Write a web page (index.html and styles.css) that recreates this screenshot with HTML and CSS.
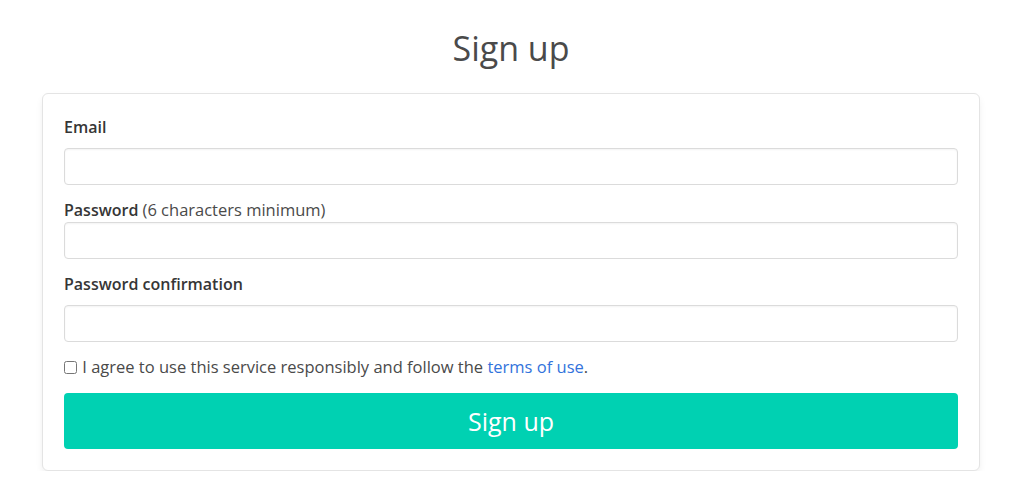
FILE: index.html
```html
<!DOCTYPE html>
<html lang="en">
<head>
  <meta charset="UTF-8">
  <meta name="viewport" content="width=device-width, initial-scale=1.0">
  <title>Sign up</title>
  <link rel="stylesheet" href="styles.css">
</head>
<body>
  <section class="page">
    <h1 class="title">Sign up</h1>

    <form class="box" action="#" onsubmit="return false;">
      <div class="field">
        <label class="label" for="email">Email</label>
        <input class="input" type="email" id="email">
      </div>

      <div class="field">
        <div class="label label-tight">Password <span class="hint">(6 characters minimum)</span></div>
        <input class="input" type="password" id="password">
      </div>

      <div class="field">
        <label class="label" for="password_confirmation">Password confirmation</label>
        <input class="input" type="password" id="password_confirmation">
      </div>

      <div class="field">
        <label class="checkbox"><input type="checkbox"> I agree to use this service responsibly and follow the <a href="#">terms of use</a>.</label>
      </div>

      <button class="button" type="submit">Sign up</button>
    </form>
  </section>
</body>
</html>
```

FILE: styles.css
```css
body {
  margin: 0;
  font-family: "Open Sans", Lato, sans-serif;
  font-size: 16.5px;
  line-height: 24px;
  color: #4a4a4a;
  background: #ffffff;
}
.page {
  padding: 30px 44px 0 42px;
}
.title {
  margin: 0 0 27px;
  font-size: 34px;
  font-weight: 400;
  line-height: 36px;
  text-align: center;
  color: #4a4a4a;
}
.box {
  background: #fff;
  border: 1px solid #e4e4e4;
  border-radius: 6px;
  box-shadow: 0 4px 8px -2px rgba(10, 10, 10, 0.1);
  padding: 21px 21px 21px;
}
.field {
  margin-bottom: 13px;
}
.label {
  display: block;
  font-size: 16px;
  font-weight: 600;
  color: #363636;
  margin-bottom: 9px;
}
.label-tight {
  margin-bottom: 0;
}
.hint {
  font-size: 16.5px;
  font-weight: 400;
  color: #4a4a4a;
}
.input {
  display: block;
  box-sizing: border-box;
  width: 100%;
  height: 37px;
  padding: 0 11px;
  font: inherit;
  border: 1px solid #dbdbdb;
  border-radius: 4px;
  box-shadow: inset 0 1px 2px rgba(10, 10, 10, 0.05);
}
.checkbox {
  display: block;
  color: #4a4a4a;
}
.checkbox input {
  margin: 0 1px 0 0;
  width: 13px;
  height: 13px;
  vertical-align: -1px;
}
.checkbox a {
  color: #3273dc;
  text-decoration: none;
}
.button {
  display: block;
  width: 100%;
  height: 56px;
  margin-top: 14px;
  background: #00d1b2;
  color: #fff;
  border: none;
  border-radius: 4px;
  font-family: inherit;
  font-size: 25px;
  cursor: pointer;
}
```
